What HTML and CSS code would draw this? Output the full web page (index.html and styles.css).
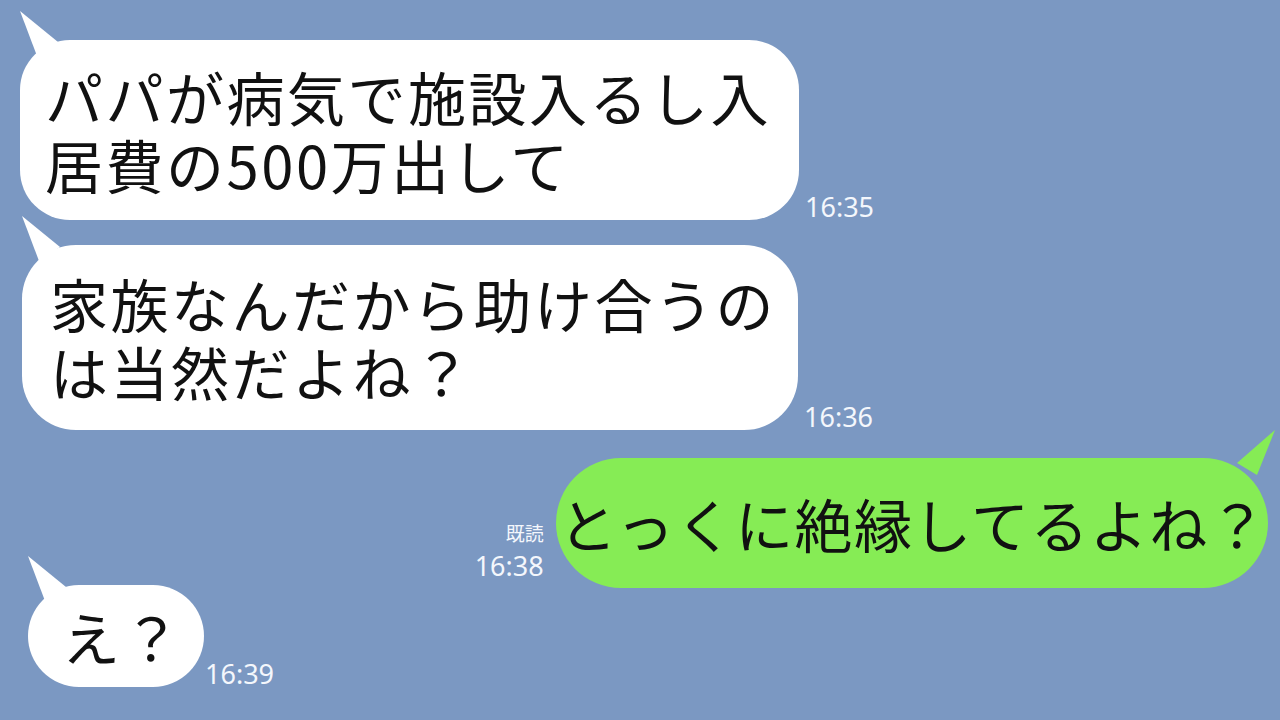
FILE: index.html
```html
<!DOCTYPE html>
<html lang="ja">
  <head>
    <meta charset="utf-8" />
    <meta name="viewport" content="width=device-width, initial-scale=1.0" />
    <title>トーク</title>
    <link rel="stylesheet" href="styles.css">
  </head>
  <body>
    <main class="talk">
      <div class="row row-first">
        <div class="bubble bubble-in">パパが病気で施設入るし入<br>居費の500万出して</div>
        <div class="meta"><span class="time">16:35</span></div>
      </div>

      <div class="row row-second">
        <div class="bubble bubble-in bubble-wide">家族なんだから助け合うの<br>は当然だよね？</div>
        <div class="meta"><span class="time">16:36</span></div>
      </div>

      <div class="row row-mine">
        <div class="meta meta-mine">
          <span class="read">既読</span>
          <span class="time">16:38</span>
        </div>
        <div class="bubble bubble-out">とっくに絶縁してるよね？</div>
      </div>

      <div class="row row-last">
        <div class="bubble bubble-in bubble-short">え？</div>
        <div class="meta"><span class="time">16:39</span></div>
      </div>
    </main>
  </body>
</html>
```

FILE: styles.css
```css
/* Page */
body {
  margin: 0;
  background: #7b98c2;
  font-family: "Noto Sans CJK JP", "Noto Sans", sans-serif;
  color: #111;
}

.talk {
  width: 1280px;
  height: 720px;
  overflow: hidden;
  display: flex;
  flex-direction: column;
  padding-top: 40px;
  box-sizing: border-box;
}

/* Rows */
.row {
  display: flex;
  align-items: flex-end;
  gap: 6px;
}

.row-first {
  padding-left: 20px;
}

.row-second {
  margin-top: 25px;
  padding-left: 22px;
}

.row-mine {
  margin-top: 28px;
  justify-content: flex-end;
  padding-right: 12px;
  gap: 12px;
}

.row-last {
  margin-top: -3px;
  padding-left: 28px;
  gap: 1px;
}

/* Bubbles */
.bubble {
  position: relative;
  font-size: 58px;
  line-height: 68px;
  white-space: nowrap;
}

.bubble-in {
  background: #fff;
  border-radius: 50px;
  padding: 22px 28px 22px 25px;
  letter-spacing: 2.5px;
}

.bubble-wide {
  padding: 24px 22px 25px 28px;
  border-radius: 54px;
}

.bubble-short {
  padding: 17px 21px 17px 34px;
  border-radius: 51px;
}

.bubble-in::before {
  content: "";
  position: absolute;
  left: 0;
  top: -29px;
  width: 40px;
  height: 46px;
  background: #fff;
  clip-path: polygon(0 0, 38px 31px, 17px 45px);
}

.bubble-out {
  background: #86ec55;
  border-radius: 65px;
  padding: 31px 0 31px 3px;
  letter-spacing: 1.4px;
}

.bubble-out::before {
  content: "";
  position: absolute;
  right: -7px;
  top: -28px;
  width: 40px;
  height: 46px;
  background: #86ec55;
  clip-path: polygon(40px 0, 2px 33px, 22px 45px);
}

/* Timestamps */
.meta {
  display: flex;
  flex-direction: column;
  align-items: flex-start;
  margin-bottom: -3px;
  font-family: "Noto Sans", sans-serif;
  color: #f4f7fc;
}

.meta-mine {
  align-items: flex-end;
  margin-bottom: 6px;
}

.time {
  font-size: 27px;
  line-height: 32px;
}

.read {
  font-family: "Noto Sans CJK JP", sans-serif;
  font-size: 19px;
  line-height: 26px;
  margin-bottom: 4px;
}
```
